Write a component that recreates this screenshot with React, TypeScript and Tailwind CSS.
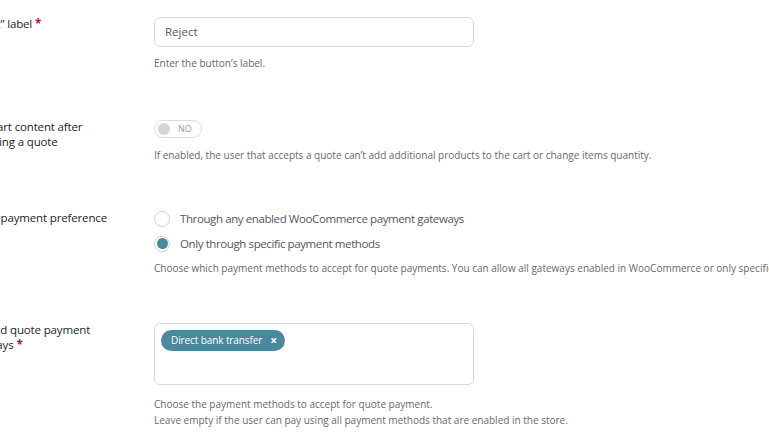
const Label = ({ children, required }: { children: React.ReactNode; required?: boolean }) => (
  <div className="w-[150px] mr-[39px] -mt-[1px] text-[11.5px] leading-[15px] tracking-[-0.15px] text-[#1d2327] shrink-0">
    {children}
    {required && <span className="text-[#a3173a] font-bold"> *</span>}
  </div>
)

const Help = ({ children }: { children: React.ReactNode }) => (
  <p className="text-[10px] leading-[16px] text-[#646970] whitespace-nowrap">{children}</p>
)

const App = () => {
  return (
    <div className="w-[769px] h-[437px] overflow-hidden bg-white font-['Open_Sans',sans-serif]">
      <div className="-ml-[35px] pt-[17px]">
        {/* Reject label */}
        <div className="flex h-[103px]">
          <Label required>&ldquo;Reject&rdquo; label</Label>
          <div className="flex flex-col">
            <div className="w-[320px] h-[30px] border border-[#d8d8d8] rounded-md px-[10px] flex items-center text-[11.5px] text-[#50575e]">
              Reject
            </div>
            <div className="mt-[8px]">
              <Help>Enter the button&#8217;s label.</Help>
            </div>
          </div>
        </div>

        {/* Lock cart */}
        <div className="flex h-[91px]">
          <Label>Lock cart content after accepting a quote</Label>
          <div className="flex flex-col">
            <div className="w-[48px] h-[18px] border border-[#dcdcdc] rounded-full flex items-center pl-[3px] gap-[8px]">
              <span className="w-[12px] h-[12px] rounded-full bg-[#d5d5d5]" />
              <span className="text-[9px] text-[#9a9a9a]">NO</span>
            </div>
            <div className="mt-[9px]">
              <Help>If enabled, the user that accepts a quote can&#8217;t add additional products to the cart or change items quantity.</Help>
            </div>
          </div>
        </div>

        {/* Payment preference */}
        <div className="flex h-[112px]">
          <Label>Quote payment preference</Label>
          <div className="flex flex-col">
            <div className="flex items-center gap-[10px] h-[16px]">
              <span className="w-[16px] h-[16px] rounded-full border border-[#d0d0d0] bg-white" />
              <span className="text-[11.5px] tracking-[-0.4px] text-[#50575e]">Through any enabled WooCommerce payment gateways</span>
            </div>
            <div className="flex items-center gap-[10px] h-[16px] mt-[8.5px]">
              <span className="w-[16px] h-[16px] rounded-full border border-[#d0d0d0] bg-white flex items-center justify-center">
                <span className="w-[11px] h-[11px] rounded-full bg-[#4a889b]" />
              </span>
              <span className="text-[11.5px] tracking-[-0.4px] text-[#50575e]">Only through specific payment methods</span>
            </div>
            <div className="mt-[8px]">
              <Help>Choose which payment methods to accept for quote payments. You can allow all gateways enabled in WooCommerce or only specific ones.</Help>
            </div>
          </div>
        </div>

        {/* Gateways */}
        <div className="flex">
          <Label required>Enabled quote payment gateways</Label>
          <div className="flex flex-col">
            <div className="w-[320px] h-[62px] border border-[#d8d8d8] rounded-md p-[6px] flex items-start">
              <span className="flex items-center h-[21px] pl-[10px] pr-[8px] gap-[8px] rounded-full bg-[#4a889b] text-white text-[10px] font-medium tracking-[-0.1px]">
                Direct bank transfer
                <span className="text-[12px] font-bold leading-none">×</span>
              </span>
            </div>
            <div className="mt-[11px]">
              <Help>Choose the payment methods to accept for quote payment.</Help>
              <Help>Leave empty if the user can pay using all payment methods that are enabled in the store.</Help>
            </div>
          </div>
        </div>
      </div>
    </div>
  )
}

export default App
